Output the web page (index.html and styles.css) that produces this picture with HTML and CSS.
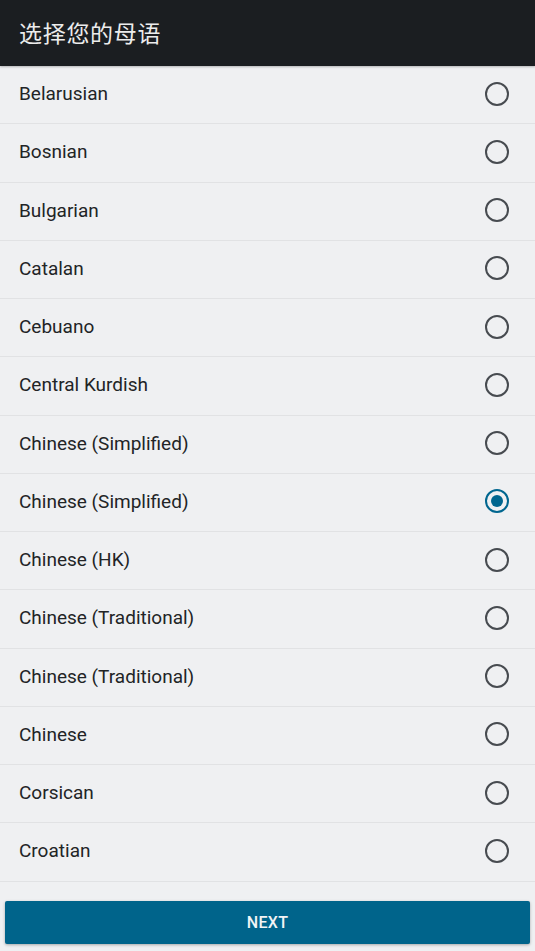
FILE: index.html
```html
<!DOCTYPE html>
<html lang="zh">
<head>
    <meta charset="UTF-8">
    <meta name="viewport" content="width=device-width, initial-scale=1.0">
    <title>选择您的母语</title>
    <link rel="stylesheet" href="styles.css">
</head>
<body>
    <div class="toolbar">
        <h1 class="toolbar-title">选择您的母语</h1>
    </div>

    <ul class="lang-list">
        <li class="lang-row"><span class="lang-name">Belarusian</span><span class="radio"></span></li>
        <li class="lang-row"><span class="lang-name">Bosnian</span><span class="radio"></span></li>
        <li class="lang-row"><span class="lang-name">Bulgarian</span><span class="radio"></span></li>
        <li class="lang-row"><span class="lang-name">Catalan</span><span class="radio"></span></li>
        <li class="lang-row"><span class="lang-name">Cebuano</span><span class="radio"></span></li>
        <li class="lang-row"><span class="lang-name">Central Kurdish</span><span class="radio"></span></li>
        <li class="lang-row"><span class="lang-name">Chinese (Simplified)</span><span class="radio"></span></li>
        <li class="lang-row"><span class="lang-name">Chinese (Simplified)</span><span class="radio checked"></span></li>
        <li class="lang-row"><span class="lang-name">Chinese (HK)</span><span class="radio"></span></li>
        <li class="lang-row"><span class="lang-name">Chinese (Traditional)</span><span class="radio"></span></li>
        <li class="lang-row"><span class="lang-name">Chinese (Traditional)</span><span class="radio"></span></li>
        <li class="lang-row"><span class="lang-name">Chinese</span><span class="radio"></span></li>
        <li class="lang-row"><span class="lang-name">Corsican</span><span class="radio"></span></li>
        <li class="lang-row"><span class="lang-name">Croatian</span><span class="radio"></span></li>
    </ul>

    <div class="footer">
        <button class="next-btn">NEXT</button>
    </div>
</body>
</html>
```

FILE: styles.css
```css
* {
    margin: 0;
    padding: 0;
    box-sizing: border-box;
    font-family: Roboto, "Noto Sans CJK SC", sans-serif;
}

body {
    width: 535px;
    height: 951px;
    overflow: hidden;
    background-color: #eff0f2;
    display: flex;
    flex-direction: column;
}

.toolbar {
    height: 66px;
    flex-shrink: 0;
    background-color: #1b1e21;
    display: flex;
    align-items: center;
    padding: 0 19px;
    box-shadow: 0 1px 2px rgba(0, 0, 0, 0.25);
    position: relative;
    z-index: 1;
}

.toolbar-title {
    color: #ececec;
    font-size: 23px;
    font-weight: normal;
    letter-spacing: 0.7px;
    padding-bottom: 2px;
}

.lang-list {
    list-style: none;
}

.lang-row {
    height: 58.25px;
    display: flex;
    align-items: center;
    justify-content: space-between;
    padding: 0 26px 2px 19px;
    border-bottom: 1px solid #e1e2e4;
}

.lang-name {
    color: #222426;
    font-size: 19px;
}

.radio {
    width: 24px;
    height: 24px;
    border: 2px solid #474b50;
    border-radius: 50%;
    display: flex;
    align-items: center;
    justify-content: center;
}

.radio.checked {
    border-color: #00668f;
}

.radio.checked::after {
    content: "";
    width: 12px;
    height: 12px;
    border-radius: 50%;
    background-color: #00668f;
}

.footer {
    padding: 19.5px 5px 0;
}

.next-btn {
    width: 100%;
    height: 43px;
    background-color: #00648b;
    border: none;
    border-radius: 2px;
    box-shadow: 0 1px 3px rgba(0, 0, 0, 0.3);
    color: #f2f4f6;
    font-size: 16px;
    font-weight: 500;
    letter-spacing: 0.3px;
}
```
